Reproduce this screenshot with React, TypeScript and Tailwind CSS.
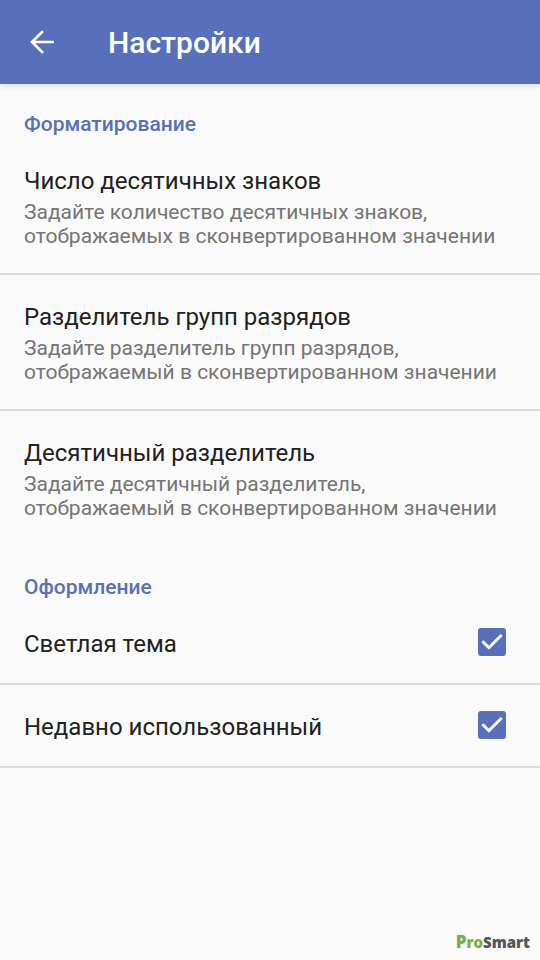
import React, { useState } from 'react';

interface Preference {
  title: string;
  summary: string[];
}

const FORMATTING: Preference[] = [
  {
    title: 'Число десятичных знаков',
    summary: ['Задайте количество десятичных знаков,', 'отображаемых в сконвертированном значении'],
  },
  {
    title: 'Разделитель групп разрядов',
    summary: ['Задайте разделитель групп разрядов,', 'отображаемый в сконвертированном значении'],
  },
  {
    title: 'Десятичный разделитель',
    summary: ['Задайте десятичный разделитель,', 'отображаемый в сконвертированном значении'],
  },
];

const CategoryTitle: React.FC<{ children: React.ReactNode }> = ({ children }) => (
  <h2 className="px-6 pt-[25px] text-[21px] leading-[30px] font-medium text-[#5870bb]">{children}</h2>
);

const PreferenceRow: React.FC<Preference> = ({ title, summary }) => (
  <button type="button" className="block w-full px-6 pt-6 pb-[25px] text-left">
    <span className="block text-2xl leading-9 text-[#212121]">{title}</span>
    <span className="mt-px block text-[21px] leading-6 text-[#757575]">
      {summary.map((line) => (
        <span key={line} className="block">{line}</span>
      ))}
    </span>
  </button>
);

const CheckboxRow: React.FC<{ id: string; title: string }> = ({ id, title }) => {
  const [checked, setChecked] = useState(true);

  return (
    <li className="flex items-center justify-between border-b-2 border-[#dcdcdc] pr-[34px] pl-6">
      <label htmlFor={id} className="grow pt-6 pb-[21px] text-2xl leading-9 text-[#212121]">
        {title}
      </label>
      <span className="relative mb-0.5 size-7">
        <input
          id={id}
          type="checkbox"
          checked={checked}
          onChange={(e) => setChecked(e.target.checked)}
          className="peer block size-7 appearance-none rounded-[3px] border-2 border-[#757575] checked:border-[#5870bb] checked:bg-[#5870bb]"
        />
        <svg
          viewBox="0 0 28 28"
          className="pointer-events-none absolute inset-0 hidden size-7 peer-checked:block"
          fill="none"
          stroke="white"
          strokeWidth="3"
        >
          <path d="M4.4 13.2l6.5 6.5L23.6 7" />
        </svg>
      </span>
    </li>
  );
};

export default function App() {
  return (
    <div className="flex min-h-screen flex-col bg-[#fafafa] font-['Roboto',sans-serif]">
      <header className="flex h-[84px] items-center gap-12 bg-[#5870bb] px-6 text-white shadow-[0_2px_6px_rgba(0,0,0,0.12)]">
        <button type="button" aria-label="Назад">
          <svg viewBox="0 0 24 24" className="size-9" fill="currentColor">
            <path d="M20 11.2H7.5l5.8-5.8L12 4.1 4.1 12l7.9 7.9 1.3-1.3-5.8-5.8H20z" />
          </svg>
        </button>
        <h1 className="pt-0.5 text-3xl font-medium">Настройки</h1>
      </header>

      <main className="grow">
        <section>
          <CategoryTitle>Форматирование</CategoryTitle>
          <ul>
            {FORMATTING.map((item) => (
              <li key={item.title} className="border-b-2 border-[#dcdcdc] last:border-transparent">
                <PreferenceRow {...item} />
              </li>
            ))}
          </ul>
        </section>

        <section>
          <CategoryTitle>Оформление</CategoryTitle>
          <ul>
            <CheckboxRow id="light-theme" title="Светлая тема" />
            <CheckboxRow id="recently-used" title="Недавно использованный" />
          </ul>
        </section>
      </main>

      <footer className="flex justify-end px-2.5 pb-2">
        <span className="font-['Open_Sans',sans-serif] text-[15px] leading-5 font-extrabold text-[#555555]">
          <span className="text-[#76b043]"><span className="text-[17px]">P</span>ro</span>Smart
        </span>
      </footer>
    </div>
  );
}
